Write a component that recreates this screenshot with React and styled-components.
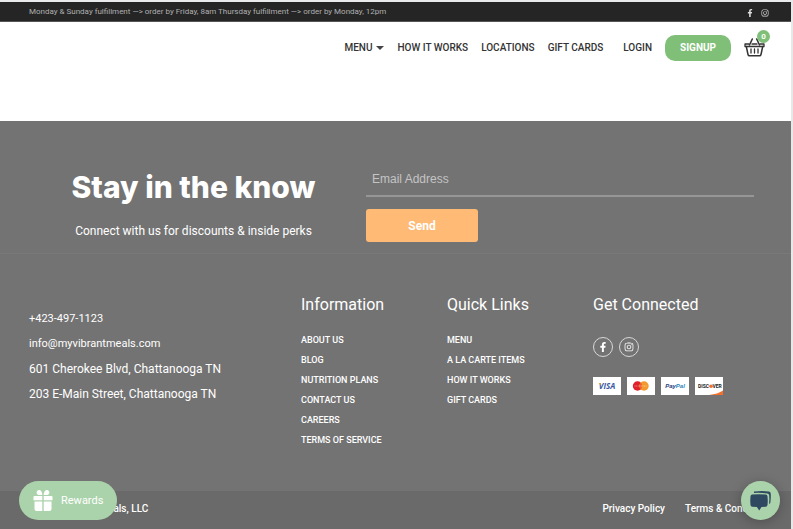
import React from 'react'
import styled, { createGlobalStyle } from 'styled-components'
import { FaFacebookF, FaInstagram } from 'react-icons/fa'

const information = ['ABOUT US', 'BLOG', 'NUTRITION PLANS', 'CONTACT US', 'CAREERS', 'TERMS OF SERVICE']
const quickLinks = ['MENU', 'A LA CARTE ITEMS', 'HOW IT WORKS', 'GIFT CARDS']

function App() {
  return (
    <Page>
      <GlobalStyle />
      <TopBar>
        <Notice>Monday &amp; Sunday fulfillment —&gt; order by Friday, 8am Thursday fulfillment —&gt; order by Monday, 12pm</Notice>
        <TopSocial>
          <a href="#facebook" aria-label="Facebook"><FaFacebookF /></a>
          <a href="#instagram" aria-label="Instagram"><FaInstagram /></a>
        </TopSocial>
      </TopBar>

      <Header>
        <Nav>
          <NavLink href="#menu">MENU <Caret /></NavLink>
          <NavLink href="#how">HOW IT WORKS</NavLink>
          <NavLink href="#locations">LOCATIONS</NavLink>
          <NavLink href="#gift">GIFT CARDS</NavLink>
        </Nav>
        <Account>
          <NavLink href="#login">LOGIN</NavLink>
          <SignUp type="button">SIGNUP</SignUp>
          <Cart href="#cart" aria-label="Cart">
            <BasketIcon />
            <Badge>0</Badge>
          </Cart>
        </Account>
      </Header>

      <Footer>
        <Newsletter>
          <Intro>
            <Title>Stay in the know</Title>
            <Lead>Connect with us for discounts &amp; inside perks</Lead>
          </Intro>
          <Form onSubmit={(e) => e.preventDefault()}>
            <Email type="email" placeholder="Email Address" aria-label="Email Address" />
            <Send type="submit">Send</Send>
          </Form>
        </Newsletter>

        <Columns>
          <Contact>
            <a href="tel:+4234971123">+423-497-1123</a>
            <a href="mailto:info@myvibrantmeals.com">info@myvibrantmeals.com</a>
            <Address>601 Cherokee Blvd, Chattanooga TN</Address>
            <Address>203 E-Main Street, Chattanooga TN</Address>
          </Contact>
          <LinkColumn title="Information" links={information} />
          <LinkColumn title="Quick Links" links={quickLinks} />
          <div>
            <ColumnTitle>Get Connected</ColumnTitle>
            <Social>
              <Round href="#facebook" aria-label="Facebook"><FaFacebookF /></Round>
              <Round href="#instagram" aria-label="Instagram"><FaInstagram /></Round>
            </Social>
            <Cards>
              <Card><VisaMark /></Card>
              <Card><MastercardMark /></Card>
              <Card><PaypalMark /></Card>
              <Card><DiscoverMark /></Card>
            </Cards>
          </div>
        </Columns>

        <Legal>
          <span>© 2023 Vibrant Meals, LLC</span>
          <LegalLinks>
            <a href="#privacy">Privacy Policy</a>
            <a href="#terms">Terms &amp; Conditions</a>
          </LegalLinks>
        </Legal>
      </Footer>

      <Rewards type="button"><GiftIcon />Rewards</Rewards>
      <Chat type="button" aria-label="Chat"><ChatIcon /></Chat>
    </Page>
  )
}

function LinkColumn({ title, links }) {
  return (
    <div>
      <ColumnTitle>{title}</ColumnTitle>
      <LinkList>
        {links.map((link) => (
          <li key={link}><a href="#page">{link}</a></li>
        ))}
      </LinkList>
    </div>
  )
}

const BasketIcon = () => (
  <svg width="21" height="19" viewBox="0 0 21 19" fill="none" stroke="#333" strokeLinecap="round" strokeLinejoin="round">
    <path d="M5 6H1v2.500h19V6h-4M8 6h5" strokeWidth="1.300" />
    <path d="M2.300 8.500 4 16.500Q4.300 17.800 5.500 17.800H15.500Q16.700 17.800 17 16.500L18.700 8.500" strokeWidth="1.500" />
    <path d="M5.500 7 8.300 1M15.500 7 12.700 1" strokeWidth="1.600" />
    <path d="M7 11v4M10.500 11v4M14 11v4" strokeWidth="1.300" />
  </svg>
)

const GiftIcon = () => (
  <svg width="20" height="21" viewBox="0 0 20 21" fill="#fff">
    <path d="M9.300 5H5.600A2.500 2.500 0 1 1 8.200 1.200C9 2 9.300 3.600 9.300 5ZM10.700 5h3.700a2.500 2.500 0 1 0-2.600-3.800C11 2 10.700 3.600 10.700 5Z" />
    <path d="M1.500 6h7.800v4.200H.500V7q0-1 1-1ZM10.700 6h7.800q1 0 1 1v3.200h-8.800ZM1.500 11.600h7.800V21H3.500q-2 0-2-2ZM10.700 11.600h7.800V19q0 2-2 2h-5.800Z" />
  </svg>
)

const ChatIcon = () => (
  <svg width="21" height="21" viewBox="0 0 21 21" fill="#2f4a60">
    <path d="M4 1.500Q12 .300 19 1.500 20.700 1.800 20.800 4q.200 4-.400 8.500-.200 1.200-1.300 1.600.500-5 .1-8.600-.2-1.700-1.800-1.900Q10 2.500 4 3Z" />
    <path d="M2.200 4.600Q9 3.800 15.800 4.600q1.500.2 1.700 1.700.5 4.300 0 8.700-.2 1.500-1.700 1.700l-4.300.4L9.200 20.500 6.900 17.100l-4.700-.4Q.7 16.500.5 15q-.5-4.400 0-8.700.2-1.500 1.700-1.700Z" />
  </svg>
)

const VisaMark = () => (
  <svg width="28" height="18" viewBox="0 0 28 18" role="img" aria-label="Visa">
    <text x="14" y="12" textAnchor="middle" fontFamily="Open Sans, sans-serif" fontSize="8" fontWeight="700" fontStyle="italic" fill="#3a5aa5">VISA</text>
    <path d="M5.500 6h2l1.200 2.500Z" fill="#e8a33d" />
  </svg>
)

const MastercardMark = () => (
  <svg width="28" height="18" viewBox="0 0 28 18" role="img" aria-label="Mastercard">
    <circle cx="10.500" cy="9" r="4.700" fill="#e0202c" />
    <circle cx="17" cy="9" r="4.700" fill="#f29a2e" />
    <path d="M13.750 5.600a4.700 4.700 0 0 1 0 6.800 4.700 4.700 0 0 1 0-6.800Z" fill="#f0602a" />
    <path d="M7.500 9h12.500" stroke="#fff" strokeWidth=".8" strokeDasharray="1 .6" opacity=".6" />
  </svg>
)

const PaypalMark = () => (
  <svg width="28" height="18" viewBox="0 0 28 18" role="img" aria-label="PayPal">
    <text x="14" y="11" textAnchor="middle" fontFamily="Liberation Sans, sans-serif" fontSize="6" fontWeight="700" fontStyle="italic" fill="#1f3f7a">
      Pay<tspan fill="#2a86bd">Pal</tspan>
    </text>
  </svg>
)

const DiscoverMark = () => (
  <svg width="28" height="18" viewBox="0 0 28 18" role="img" aria-label="Discover">
    <path d="M28 13.500V18H14q9-1 14-4.500Z" fill="#f26f2c" />
    <text x="3" y="11" fontFamily="Roboto, sans-serif" fontSize="5" fontWeight="700" fill="#222">DISC</text>
    <circle cx="16" cy="9.300" r="1.800" fill="#f26f2c" />
    <text x="17.500" y="11" fontFamily="Roboto, sans-serif" fontSize="5" fontWeight="700" fill="#222">VER</text>
  </svg>
)

export default App

const GlobalStyle = createGlobalStyle`
    * {
        box-sizing: border-box;
    }
    body {
        margin: 0;
        background-color: #e8e8e8;
        font-family: Roboto, "Liberation Sans", sans-serif;
    }
    a {
        color: inherit;
        text-decoration: none;
    }
    button, input {
        font-family: inherit;
        border: 0;
    }
    button {
        cursor: pointer;
    }
`

const Page = styled.div`
    border-top: 2px solid #e8eaec;
    border-right: 2px solid #e8e8e8;
    background-color: #fff;
`

const TopBar = styled.div`
    display: flex;
    align-items: center;
    justify-content: space-between;
    height: 20px;
    padding: 1px 22px 0 29px;
    background-color: #252525;
    border-bottom: 1px solid #555;
    color: #b0b0b0;
`

const Notice = styled.p`
    margin: 0;
    font-size: 8px;
    font-weight: normal;
    line-height: 12px;
    white-space: nowrap;
`

const TopSocial = styled.div`
    display: flex;
    gap: 7px;
    padding-top: 1px;
    font-size: 8px;
    color: #ddd;

    a {
        display: flex;
    }
`

const Header = styled.header`
    display: flex;
    align-items: center;
    justify-content: flex-end;
    gap: 20px;
    height: 99px;
    padding: 0 26px 48px;
    color: #333;
`

const Nav = styled.nav`
    display: flex;
    gap: 13px;
`

const Account = styled.div`
    display: flex;
    align-items: center;
    gap: 13px;
`

const NavLink = styled.a`
    display: flex;
    align-items: center;
    gap: 4px;
    font-size: 10px;
    font-weight: 500;
    line-height: 14px;
    white-space: nowrap;
`

const Caret = styled.span`
    border-left: 4px solid transparent;
    border-right: 4px solid transparent;
    border-top: 4px solid #444;
`

const SignUp = styled.button`
    width: 66px;
    height: 26px;
    padding: 0;
    border-radius: 10px;
    background-color: #80bf78;
    color: #fff;
    font-size: 10px;
    font-weight: bold;
`

const Cart = styled.a`
    position: relative;
    display: flex;
`

const Badge = styled.span`
    position: absolute;
    top: -8px;
    right: -5px;
    width: 13px;
    height: 13px;
    border-radius: 50%;
    background-color: #80bf78;
    color: #fff;
    font-size: 8px;
    font-weight: bold;
    line-height: 13px;
    text-align: center;
`

const Footer = styled.footer`
    background-color: #737373;
    color: #fff;
`

const Newsletter = styled.section`
    display: grid;
    grid-template-columns: 345fr 388fr;
    padding: 44px 37px 11px 21px;
    border-bottom: 1px solid #797979;
`

const Intro = styled.div`
    text-align: center;
`

const Title = styled.h2`
    margin: 0 0 14px;
    font-family: Inter, "Liberation Sans", sans-serif;
    font-size: 30px;
    font-weight: 800;
    line-height: 44px;
    white-space: nowrap;
`

const Lead = styled.p`
    margin: 0;
    font-size: 12px;
    line-height: 16px;
`

const Form = styled.form`
    display: flex;
    flex-direction: column;
    align-items: flex-start;
    gap: 12px;
`

const Email = styled.input`
    width: 100%;
    height: 32px;
    padding: 0 6px 2px;
    border-bottom: 2px solid #969696;
    background-color: transparent;
    color: #fff;
    font-family: "Liberation Sans", Arial, sans-serif;
    font-size: 12px;
    outline: none;

    &::placeholder {
        color: #c4c4c4;
        opacity: 1;
    }
`

const Send = styled.button`
    width: 112px;
    height: 33px;
    border-radius: 3px;
    background-color: #ffba75;
    color: #fff;
    font-size: 12px;
    font-weight: bold;
`

const Columns = styled.section`
    display: grid;
    grid-template-columns: 272fr 146fr 146fr 169fr;
    padding: 39px 29px 41px;
`

const Contact = styled.div`
    display: flex;
    flex-direction: column;
    gap: 9px;
    padding-top: 18px;
    font-size: 11px;
    line-height: 16px;
`

const Address = styled.span`
    font-size: 12px;
`

const ColumnTitle = styled.h3`
    margin: 0 0 13px;
    font-size: 16px;
    font-weight: normal;
    line-height: 24px;
`

const LinkList = styled.ul`
    margin: 0;
    padding: 0;
    list-style: none;
    font-size: 9px;
    font-weight: 500;
    line-height: 20px;
    white-space: nowrap;
`

const Social = styled.div`
    display: flex;
    gap: 6px;
    padding-top: 7px;
`

const Round = styled.a`
    display: flex;
    align-items: center;
    justify-content: center;
    width: 20px;
    height: 20px;
    border: 1px solid #d8d8d8;
    border-radius: 50%;
    font-size: 10px;
`

const Cards = styled.div`
    display: flex;
    gap: 6px;
    margin-top: 20px;
`

const Card = styled.span`
    display: flex;
    width: 28px;
    height: 18px;
    background-color: #fff;
`

const Legal = styled.div`
    display: flex;
    align-items: center;
    justify-content: space-between;
    height: 39px;
    padding: 0 18px 3px 29px;
    background-color: #6a6a6a;
    font-size: 10px;
    font-weight: 500;
    line-height: 16px;
`

const LegalLinks = styled.div`
    display: flex;
    gap: 20px;
`

const Rewards = styled.button`
    position: fixed;
    left: 19px;
    bottom: 9px;
    display: flex;
    align-items: center;
    gap: 8px;
    height: 39px;
    padding: 0 14px;
    border-radius: 20px;
    background-color: #abd3ab;
    color: #fff;
    font-size: 11px;
`

const Chat = styled.button`
    position: fixed;
    right: 13px;
    bottom: 9px;
    display: flex;
    align-items: center;
    justify-content: center;
    width: 39px;
    height: 39px;
    padding: 0;
    border-radius: 50%;
    background-color: #abd3ab;
    box-shadow: 0 2px 12px rgba(0, 0, 0, 0.25);
`
